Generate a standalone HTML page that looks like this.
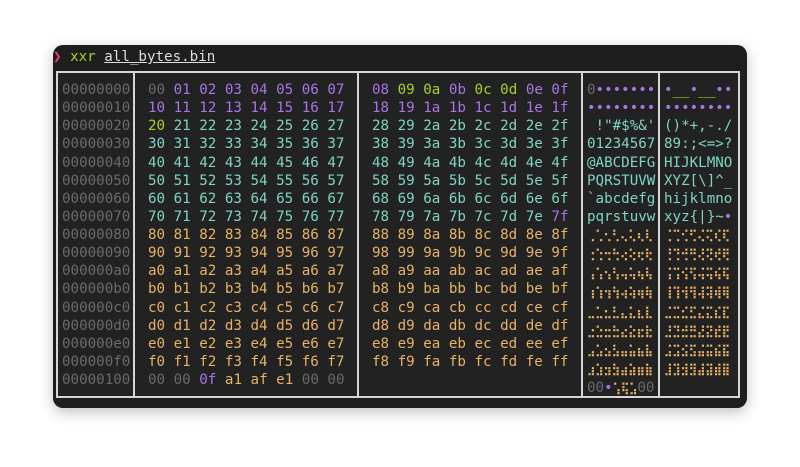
<!DOCTYPE html>
<html><head><meta charset="utf-8"><style>
html,body{margin:0;padding:0;background:#fff;width:800px;height:467px;overflow:hidden}
.win{position:absolute;left:53px;top:45px;width:694px;height:363px;background:#1e1e1e;border-radius:10px;box-shadow:0 4px 14px rgba(0,0,0,.25)}
.t{position:absolute;font-family:"DejaVu Sans Mono","Liberation Mono",monospace;font-size:14.2px;white-space:pre;line-height:18.125px;color:#7fd4c4}
.box{position:absolute;left:56px;top:71px;width:680px;height:323px;border:2px solid #d6d6d6;background:#222}
.v{position:absolute;top:71px;width:2px;height:327px;background:#d6d6d6}
.g{color:#6a6a6a}.p{color:#a675e6}.n{color:#a5d22a}.o{color:#e7b266}
.b{font-size:11.25px;font-weight:bold}
</style></head><body>
<div class="win"></div>
<div class="t" style="left:53px;top:47px;line-height:20px"><span style="color:#e83e8c">❯</span> <span class="n">xxr</span> <span style="color:#ddd;text-decoration:underline">all_bytes.bin</span></div>
<div class="box"></div>
<div class="v" style="left:133px"></div>
<div class="v" style="left:357px"></div>
<div class="v" style="left:581px"></div>
<div class="v" style="left:658px"></div>
<div class="t g" style="left:62px;top:81px">00000000
00000010
00000020
00000030
00000040
00000050
00000060
00000070
00000080
00000090
000000a0
000000b0
000000c0
000000d0
000000e0
000000f0
00000100</div>
<div class="t" style="left:148px;top:81px"><span class="g">00</span> <span class="p">01 02 03 04 05 06 07</span>
<span class="p">10 11 12 13 14 15 16 17</span>
<span class="n">20</span> 21 22 23 24 25 26 27
30 31 32 33 34 35 36 37
40 41 42 43 44 45 46 47
50 51 52 53 54 55 56 57
60 61 62 63 64 65 66 67
70 71 72 73 74 75 76 77
<span class="o">80 81 82 83 84 85 86 87
90 91 92 93 94 95 96 97
a0 a1 a2 a3 a4 a5 a6 a7
b0 b1 b2 b3 b4 b5 b6 b7
c0 c1 c2 c3 c4 c5 c6 c7
d0 d1 d2 d3 d4 d5 d6 d7
e0 e1 e2 e3 e4 e5 e6 e7
f0 f1 f2 f3 f4 f5 f6 f7</span>
<span class="g">00 00</span> <span class="p">0f</span> <span class="o">a1 af e1</span> <span class="g">00 00</span></div>
<div class="t" style="left:372px;top:81px"><span class="p">08</span> <span class="n">09 0a</span> <span class="p">0b</span> <span class="n">0c 0d</span> <span class="p">0e 0f</span>
<span class="p">18 19 1a 1b 1c 1d 1e 1f</span>
28 29 2a 2b 2c 2d 2e 2f
38 39 3a 3b 3c 3d 3e 3f
48 49 4a 4b 4c 4d 4e 4f
58 59 5a 5b 5c 5d 5e 5f
68 69 6a 6b 6c 6d 6e 6f
78 79 7a 7b 7c 7d 7e <span class="p">7f</span>
<span class="o">88 89 8a 8b 8c 8d 8e 8f
98 99 9a 9b 9c 9d 9e 9f
a8 a9 aa ab ac ad ae af
b8 b9 ba bb bc bd be bf
c8 c9 ca cb cc cd ce cf
d8 d9 da db dc dd de df
e8 e9 ea eb ec ed ee ef
f8 f9 fa fb fc fd fe ff</span></div>
<div class="t" style="left:587px;top:81px"><span class="g">0</span><span class="p">•••••••</span>
<span class="p">••••••••</span>
 !"#$%&amp;'
01234567
@ABCDEFG
PQRSTUVW
`abcdefg
pqrstuvw
<span class="o b">⢀⢁⢂⢃⢄⢅⢆⢇
⢐⢑⢒⢓⢔⢕⢖⢗
⢠⢡⢢⢣⢤⢥⢦⢧
⢰⢱⢲⢳⢴⢵⢶⢷
⣀⣁⣂⣃⣄⣅⣆⣇
⣐⣑⣒⣓⣔⣕⣖⣗
⣠⣡⣢⣣⣤⣥⣦⣧
⣰⣱⣲⣳⣴⣵⣶⣷</span>
<span class="g">00</span><span class="p">•</span><span class="o b">⢡⢯⣡</span><span class="g">00</span></div>
<div class="t" style="left:664px;top:81px"><span class="p">•</span><span class="n">__</span><span class="p">•</span><span class="n">__</span><span class="p">••</span>
<span class="p">••••••••</span>
()*+,-./
89:;&lt;=&gt;?
HIJKLMNO
XYZ[\]^_
hijklmno
xyz{|}~<span class="p">•</span>
<span class="o b">⢈⢉⢊⢋⢌⢍⢎⢏
⢘⢙⢚⢛⢜⢝⢞⢟
⢨⢩⢪⢫⢬⢭⢮⢯
⢸⢹⢺⢻⢼⢽⢾⢿
⣈⣉⣊⣋⣌⣍⣎⣏
⣘⣙⣚⣛⣜⣝⣞⣟
⣨⣩⣪⣫⣬⣭⣮⣯
⣸⣹⣺⣻⣼⣽⣾⣿</span></div>
</body></html>
